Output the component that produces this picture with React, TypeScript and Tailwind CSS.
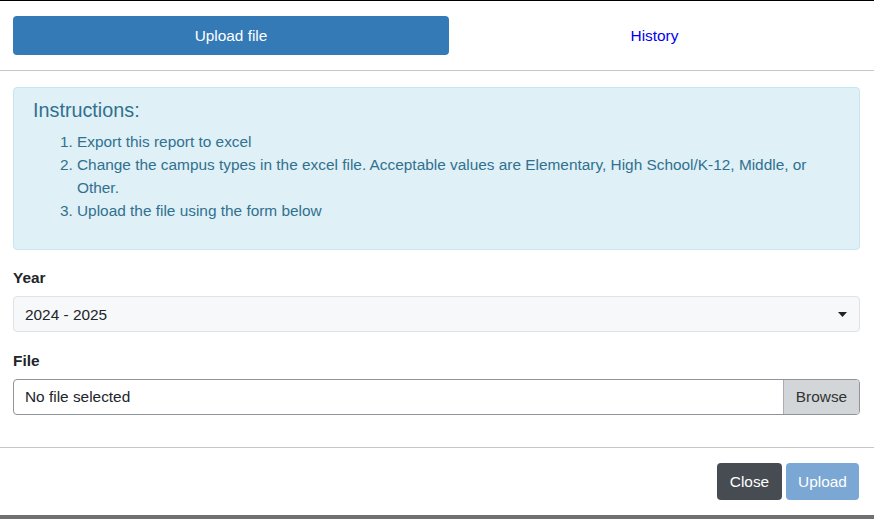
export default function App() {
  return (
    <div
      className="w-[874px] h-[519px] bg-white flex flex-col overflow-hidden text-[15.4px] text-[#333]"
      style={{ fontFamily: '"Liberation Sans", Arial, sans-serif' }}
    >
      <div className="h-px bg-black shrink-0" />

      {/* Tabs */}
      <div className="flex pl-[13px] pr-[14px] pt-[15px] pb-[15px] border-b border-[#c3c7cb]">
        <button className="w-[436px] h-[39px] rounded-[4px] bg-[#337ab7] text-white">
          Upload file
        </button>
        <a href="#" className="flex-1 flex items-center justify-center text-[#0000ee]">
          History
        </a>
      </div>

      {/* Body */}
      <div className="pl-[13px] pr-[14px] pt-[16px] pb-[32px]">
        <div className="rounded-[4px] border border-[#c7e6ef] bg-[#dff0f7] text-[#31708f] pl-[19px] pr-[19px] pt-[11px] pb-[27px]">
          <h4 className="text-[19.8px] leading-[22px]">Instructions:</h4>
          <ol className="list-decimal pl-[44px] mt-[9px] leading-[23px]">
            <li>Export this report to excel</li>
            <li>
              Change the campus types in the excel file. Acceptable values are Elementary, High
              School/K-12, Middle, or Other.
            </li>
            <li>Upload the file using the form below</li>
          </ol>
        </div>

        <label className="block mt-[17px] mb-[7px] font-bold leading-[22px] text-[#212529]">
          Year
        </label>
        <div className="h-[36px] rounded-[4px] border border-[#dfe2e6] bg-[#f7f8fa] flex items-center justify-between pl-[11px] pr-[12px] pt-px text-[#212529]">
          <span>2024 - 2025</span>
          <svg width="9" height="5" viewBox="0 0 9 5">
            <path d="M0 0h9L4.5 5z" fill="#222" />
          </svg>
        </div>

        <label className="block mt-[18px] mb-[7px] font-bold leading-[22px] text-[#212529]">
          File
        </label>
        <div className="h-[36px] rounded-[4px] border border-[#8f949a] flex overflow-hidden text-[#212529]">
          <div className="flex-1 flex items-center pl-[11px]">No file selected</div>
          <div className="w-[76px] flex items-center justify-center bg-[#d2d6d9] border-l border-[#a9aeb3] text-[#333]">
            Browse
          </div>
        </div>
      </div>

      {/* Footer */}
      <div className="border-t border-[#c3c7cb] flex justify-end gap-[4px] px-[15px] pt-[15px] pb-[15px]">
        <button className="h-[37px] w-[65px] rounded-[4px] bg-[#474c53] text-white">Close</button>
        <button className="h-[37px] w-[73px] rounded-[4px] bg-[#7aa7d3] text-white">Upload</button>
      </div>

      <div className="flex-1 bg-white" />
      <div className="h-[4px] bg-[#707070] shrink-0" />
    </div>
  );
}
